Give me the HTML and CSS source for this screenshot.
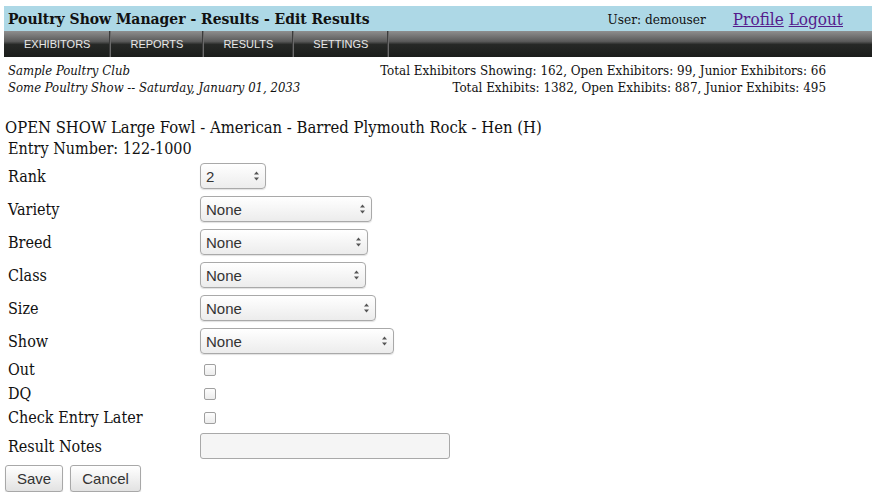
FILE: index.html
```html
<!DOCTYPE html>
<html lang="en">
    <head>
        <title>Poultry Show Manager - Results - Edit Results</title>
        <meta name="viewport" content="width=device-width, initial-scale=1">
        <link rel="stylesheet" href="styles.css">
    </head>
    <body>
        <header class="topbar">
            <h1>Poultry Show Manager - Results - Edit Results</h1>
            <span class="user">User: demouser</span>
            <span class="links"><a href="#profile">Profile</a> <a href="#logout">Logout</a></span>
        </header>
        <nav class="menu">
            <a href="#exhibitors">EXHIBITORS</a>
            <a href="#reports">REPORTS</a>
            <a href="#results">RESULTS</a>
            <a href="#settings">SETTINGS</a>
        </nav>
        <section class="show-info">
            <p class="club">Sample Poultry Club</p>
            <p class="stats">Total Exhibitors Showing: 162, Open Exhibitors: 99, Junior Exhibitors: 66</p>
            <p class="club">Some Poultry Show -- Saturday, January 01, 2033</p>
            <p class="stats">Total Exhibits: 1382, Open Exhibits: 887, Junior Exhibits: 495</p>
        </section>
        <main>
            <h2>OPEN SHOW Large Fowl - American - Barred Plymouth Rock - Hen (H)</h2>
            <p class="entry">Entry Number: 122-1000</p>
            <form class="result-form">
                <label class="row-label">Rank</label>
                <span class="select w-rank">
                    <select><option>2</option></select>
                    <svg viewBox="0 0 7 12" width="7" height="12"><path d="M1 4.5h5L3.5 1.5z M1 7.5h5L3.5 10.5z" fill="#555"/></svg>
                </span>
                <label class="row-label">Variety</label>
                <span class="select w-variety">
                    <select><option>None</option></select>
                    <svg viewBox="0 0 7 12" width="7" height="12"><path d="M1 4.5h5L3.5 1.5z M1 7.5h5L3.5 10.5z" fill="#555"/></svg>
                </span>
                <label class="row-label">Breed</label>
                <span class="select w-breed">
                    <select><option>None</option></select>
                    <svg viewBox="0 0 7 12" width="7" height="12"><path d="M1 4.5h5L3.5 1.5z M1 7.5h5L3.5 10.5z" fill="#555"/></svg>
                </span>
                <label class="row-label">Class</label>
                <span class="select w-class">
                    <select><option>None</option></select>
                    <svg viewBox="0 0 7 12" width="7" height="12"><path d="M1 4.5h5L3.5 1.5z M1 7.5h5L3.5 10.5z" fill="#555"/></svg>
                </span>
                <label class="row-label">Size</label>
                <span class="select w-size">
                    <select><option>None</option></select>
                    <svg viewBox="0 0 7 12" width="7" height="12"><path d="M1 4.5h5L3.5 1.5z M1 7.5h5L3.5 10.5z" fill="#555"/></svg>
                </span>
                <label class="row-label">Show</label>
                <span class="select w-show">
                    <select><option>None</option></select>
                    <svg viewBox="0 0 7 12" width="7" height="12"><path d="M1 4.5h5L3.5 1.5z M1 7.5h5L3.5 10.5z" fill="#555"/></svg>
                </span>
                <label class="row-label small">Out</label>
                <span class="check"><input type="checkbox"></span>
                <label class="row-label small">DQ</label>
                <span class="check"><input type="checkbox"></span>
                <label class="row-label small">Check Entry Later</label>
                <span class="check"><input type="checkbox"></span>
                <label class="row-label">Result Notes</label>
                <span class="field"><input class="notes" type="text"></span>
            </form>
            <div class="buttons">
                <button type="button">Save</button>
                <button type="button">Cancel</button>
            </div>
        </main>
    </body>
</html>
```
FILE: styles.css
```css
:root {
    --serif: "DejaVu Serif Condensed", "DejaVu Serif", serif;
    --sans: "Liberation Sans", Arial, sans-serif;
    --color-top: lightblue;
    --color-text: #111;
    --color-link: #551a8b;
    --color-control-border: #a9a9a9;
    --label-width: 195px;
}
* { box-sizing: border-box; }
body { margin: 0; padding: 6px 6px 0 4px; font-family: var(--serif); color: var(--color-text); }
p, h1, h2 { margin: 0; }

/* top bar */
.topbar { display: flex; align-items: center; height: 25px; background-color: var(--color-top); padding-left: 4px; }
.topbar h1 { font-size: 15.5px; font-weight: bold; flex: auto; }
.topbar .user { font-size: 13.5px; margin-right: 27px; }
.topbar .links { font-size: 17px; margin-right: 29px; }
.topbar a { color: var(--color-link); }

/* menu */
.menu {
    display: flex; height: 26px;
    background: linear-gradient(to bottom, #8e8e8e 0%, #5a5a5a 40%, #262826 52%, #1b1d1b 100%);
}
.menu a {
    font-family: var(--sans); font-size: 11px; color: #e8e8e8; text-decoration: none;
    display: flex; align-items: center; padding: 0 19px 0 20px;
    border-right: 1px solid #3c3c3c; box-shadow: 1px 0 0 #6a6a6a;
}

/* show info */
.show-info { display: grid; grid-template-columns: auto auto; margin: 5px 46px 0 4px; font-size: 13px; line-height: 17px; }
.show-info .club { font-style: italic; }
.show-info .stats { text-align: right; font-size: 13.3px; }

/* form */
main { padding-left: 1px; }
main h2 { font-size: 16.5px; font-weight: normal; margin-top: 22px; line-height: 20px; }
.entry { font-size: 16px; margin: 1px 0 0 3px; line-height: 19px; }
.result-form { display: grid; grid-template-columns: var(--label-width) auto; row-gap: 7px; align-items: center; justify-items: start; margin-top: 5px; }
.row-label { font-size: 16px; line-height: 17px; padding-left: 3px; }
.select { position: relative; display: inline-block; height: 26px; }
.select select {
    appearance: none; width: 100%; height: 100%; font-family: var(--sans); font-size: 15px; color: #333;
    padding: 0 0 0 5px; border: 1px solid var(--color-control-border); border-radius: 4px;
    background: linear-gradient(to bottom, #ffffff, #ececec); box-shadow: 0 1px 1px rgba(0,0,0,0.12);
}
.select svg { position: absolute; right: 6px; top: 7px; pointer-events: none; }
.w-rank { width: 66px; }
.w-variety { width: 172px; }
.w-breed { width: 168px; }
.w-class { width: 166px; }
.w-size { width: 176px; }
.w-show { width: 194px; }
.check { display: flex; height: 17px; align-items: center; padding-left: 4px; }
.check input {
    appearance: none; margin: 0; width: 12px; height: 12px;
    border: 1px solid #a0a0a0; border-radius: 2px; background: linear-gradient(to bottom, #fdfdfd, #ececec);
}
.field { display: flex; }
.notes { width: 250px; height: 26px; border: 1px solid var(--color-control-border); border-radius: 3px; background: #f5f5f5; margin: 0; }
.buttons { display: flex; gap: 7px; margin-top: 6px; padding-left: 0; }
.buttons button {
    height: 27px; font-family: var(--sans); font-size: 15px; line-height: 25px; color: #333; padding: 0 11px;
    border: 1px solid #a8a8a8; border-radius: 3px; background: linear-gradient(to bottom, #ffffff, #e2e2e2);
    box-shadow: 0 1px 1px rgba(0,0,0,0.15);
}
```
